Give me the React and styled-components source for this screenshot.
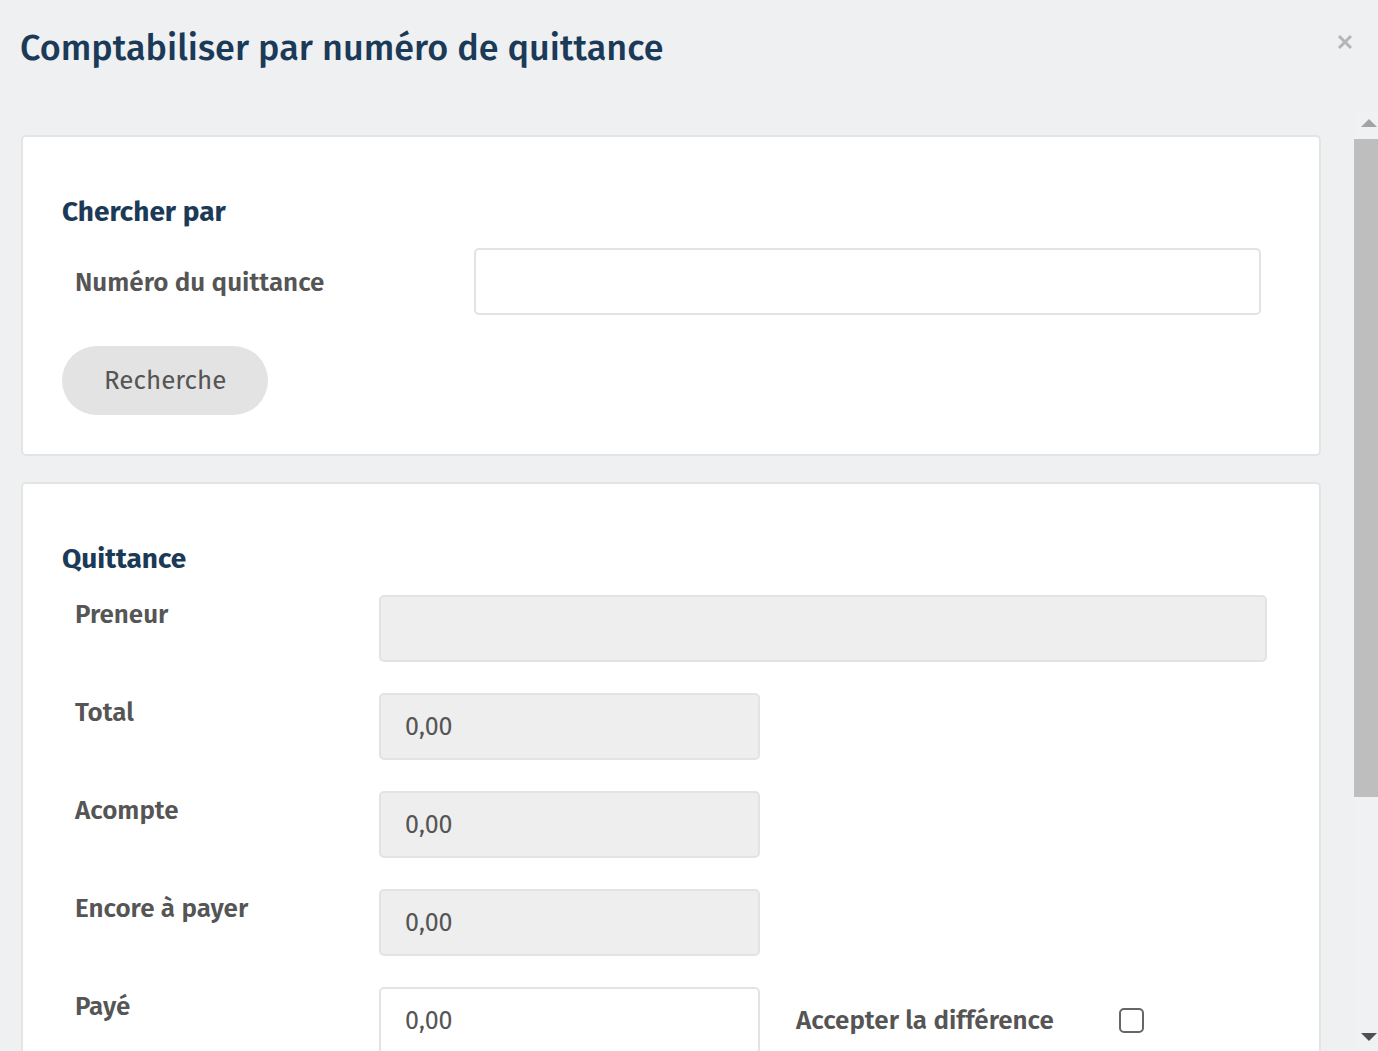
import styled, { createGlobalStyle } from 'styled-components';

const Global = createGlobalStyle`
  html, body { margin:0; height:100%; }
  body {
    background:#eff0f2;
    font-family:"Fira Sans", Lato, "Noto Sans", sans-serif;
    color:#555;
  }
`;

const Modal = styled.div`
  display:flex;
  flex-direction:column;
  height:100vh;
`;

const Header = styled.header`
  display:flex;
  justify-content:space-between;
  align-items:flex-start;
  height:112px;
  flex-shrink:0;
  box-sizing:border-box;
  padding:24px 25px 0 20px;
`;

const Title = styled.h1`
  margin:0;
  font-size:36px;
  line-height:48px;
  font-weight:500;
  color:#1b3a57;
`;

const Close = styled.button`
  border:none;
  background:none;
  padding:0;
  margin-top:10px;
  width:16px;
  height:16px;
  cursor:pointer;
`;

const Body = styled.div`
  flex:1;
  min-height:0;
  display:flex;
`;

const Scroller = styled.div`
  flex:1;
  overflow-y:auto;
  scrollbar-width:none;
  box-sizing:border-box;
  padding:23px 33px 24px 21px;
  display:flex;
  flex-direction:column;
  gap:26px;
  &::-webkit-scrollbar { display:none; }
`;

// classic scrollbar drawn beside the scrolling area
const Rail = styled.div`
  width:24px;
  flex-shrink:0;
  display:flex;
  flex-direction:column;
  background:#f0f1f2;
`;

const Arrow = styled.div`
  height:${p => p.$h}px;
  display:flex;
  justify-content:flex-end;
  align-items:${p => (p.$down ? 'flex-start' : 'flex-end')};
  padding:${p => (p.$down ? '4px' : '0')} 1px ${p => (p.$down ? '0' : '12px')} 0;
  box-sizing:border-box;
  flex-shrink:0;
`;

const Thumb = styled.div`
  height:658px;
  background:#bebebe;
  flex-shrink:0;
`;

const Track = styled.div`
  flex:1;
`;

const Card = styled.section`
  flex-shrink:0;
  background:#fff;
  border:2px solid #e4e4e4;
  border-radius:5px;
  padding:58px 52px ${p => p.$bottom || 39}px 39px;
`;

const Heading = styled.h2`
  margin:0 0 19px;
  font-size:28px;
  line-height:34px;
  font-weight:700;
  color:#1b3a57;
`;

const Row = styled.div`
  display:grid;
  grid-template-columns:${p => p.$label}px ${p => p.$field || '1fr'};
  align-items:${p => (p.$center ? 'center' : 'start')};
  margin:0 ${p => p.$right || 0}px 31px 0;
`;

const Label = styled.label`
  padding:1px 0 0 13px;
  font-size:26px;
  line-height:37px;
  font-weight:600;
  color:#555;
`;

const Field = styled.input`
  box-sizing:border-box;
  width:100%;
  height:67px;
  border:2px solid #e3e3e3;
  border-radius:5px;
  padding:0 24px;
  font:inherit;
  font-size:25px;
  color:#555;
  background:${p => (p.readOnly ? '#eee' : '#fff')};
  outline:none;
`;

const Inline = styled.div`
  display:flex;
  align-items:center;
  gap:36px;
`;

const Amount = styled.div`
  width:381px;
  flex-shrink:0;
`;

const Accept = styled.label`
  display:flex;
  align-items:center;
  gap:65px;
  font-size:26px;
  font-weight:600;
  color:#555;
`;

const Check = styled.span`
  width:25px;
  height:25px;
  box-sizing:border-box;
  border:2px solid #666;
  border-radius:5px;
`;

const Button = styled.button`
  height:69px;
  padding:0 42px;
  border:none;
  border-radius:35px;
  background:#e3e3e3;
  font:inherit;
  font-size:26px;
  color:#555;
  cursor:pointer;
`;

const amounts = ['Total', 'Acompte', 'Encore à payer'];

export default function App() {
  return (
    <Modal>
      <Global />
      <Header>
        <Title>Comptabiliser par numéro de quittance</Title>
        <Close aria-label="Fermer">
          <svg width="16" height="16" viewBox="0 0 16 16">
            <path d="M2 2L14 14M14 2L2 14" stroke="#b5b5b5" strokeWidth="3" />
          </svg>
        </Close>
      </Header>
      <Body>
        <Scroller>
          <Card>
            <Heading>Chercher par</Heading>
            <Row $label={412} $center $right={6}>
              <Label>Numéro du quittance</Label>
              <Field />
            </Row>
            <Button>Recherche</Button>
          </Card>
          <Card $bottom={300}>
            <Heading>Quittance</Heading>
            <Row $label={317}>
              <Label>Preneur</Label>
              <Field readOnly />
            </Row>
            {amounts.map(a => (
              <Row key={a} $label={317} $field="381px">
                <Label>{a}</Label>
                <Field readOnly defaultValue="0,00" />
              </Row>
            ))}
            <Row $label={317}>
              <Label>Payé</Label>
              <Inline>
                <Amount><Field defaultValue="0,00" /></Amount>
                <Accept>Accepter la différence<Check /></Accept>
              </Inline>
            </Row>
          </Card>
        </Scroller>
        <Rail>
          <Arrow $h={27}>
            <svg width="16" height="8" viewBox="0 0 16 8">
              <path d="M8 0L16 8H0Z" fill="#a3a3a3" />
            </svg>
          </Arrow>
          <Thumb />
          <Track />
          <Arrow $h={22} $down>
            <svg width="16" height="8" viewBox="0 0 16 8">
              <path d="M0 0H16L8 8Z" fill="#505050" />
            </svg>
          </Arrow>
        </Rail>
      </Body>
    </Modal>
  );
}
